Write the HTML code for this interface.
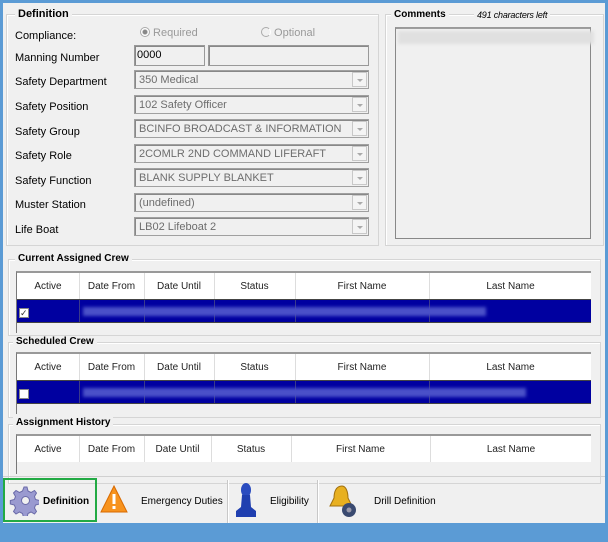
<!DOCTYPE html>
<html><head><meta charset="utf-8"><style>
*{margin:0;padding:0;box-sizing:border-box}
body{width:608px;height:526px;overflow:hidden;background:#5b9bd5;font-family:"Liberation Sans",sans-serif;font-size:11px;color:#000}
#win{position:absolute;left:3px;top:3px;width:602px;height:520px;background:#f0f0f0}
.a{position:absolute}
.gb{position:absolute;border:1px solid #d5d5d5;box-shadow:inset 1px 1px 0 #fff}
.lg{position:absolute;background:#f0f0f0;font-weight:bold;font-size:11px;padding:0 3px;white-space:nowrap}
.lbl{position:absolute;left:12px;font-size:11px}
.cb{position:absolute;left:131px;width:235px;height:19px;border:1px solid #a0a0a0;background:#f0f0f0;box-shadow:inset 1px 1px 0 #888;color:#6d6d6d;padding:3px 0 0 4px;font-size:11px}
.cb i{position:absolute;right:1px;top:1px;width:15px;height:15px;border:1px solid #c8c8c8;background:#f4f4f4}
.cb i:after{content:"";position:absolute;left:4px;top:6px;border:3px solid transparent;border-top:3px solid #aaa}
.grid{position:absolute;left:13px;width:575px;background:#f0f0f0;border-left:1px solid #777;border-top:2px solid #999}
.hdr{position:absolute;left:0;top:0;right:0;height:26px;background:#fff;font-size:10px;color:#222}
.hdr span{position:absolute;top:8px;text-align:center}
.hdr b{position:absolute;top:0;bottom:0;width:1px;background:#ddd}
.row{position:absolute;left:0;right:0;height:24px;background:#0000a0;border-top:1px solid #444;border-bottom:1px solid #444}
.row b{position:absolute;top:0;bottom:0;width:1px;background:#3a3a8a}
.blur{position:absolute;height:9px;background:#4a50c8;filter:blur(1.5px)}
.chk{position:absolute;left:2px;top:8px;width:10px;height:10px;background:#fff;border:1px solid #888}
.tb{position:absolute;height:46px;font-size:10px}
.sep{position:absolute;top:477px;width:2px;height:43px;border-left:1px solid #c8c8c8;border-right:1px solid #fff}
</style></head><body><div id="win">
<div class="gb" style="left:3px;top:11px;width:373px;height:232px"></div>
<div class="lg" style="left:12px;top:5px">Definition</div>
<div class="lbl" style="top:27px">Compliance:</div>
<div class="a" style="left:137px;top:23px;color:#999;font-size:11px"><span style="display:inline-block;width:10px;height:10px;border:1px solid #aaa;border-radius:50%;position:relative;top:1px;background:radial-gradient(#888 2px,#fff 3px)"></span> Required</div>
<div class="a" style="left:258px;top:23px;color:#999;font-size:11px"><span style="display:inline-block;width:10px;height:10px;border:1px solid #aaa;border-radius:50%;position:relative;top:1px;border-right-color:#fff"></span> Optional</div>
<div class="lbl" style="top:49px">Manning Number</div>
<div class="a" style="left:131px;top:42px;width:71px;height:21px;border:1px solid #999;box-shadow:inset 1px 1px 0 #888;padding:3px 0 0 2px">0000</div>
<div class="a" style="left:205px;top:42px;width:161px;height:21px;border:1px solid #999;box-shadow:inset 1px 1px 0 #888"></div>
<div class="lbl" style="top:73px">Safety Department</div><div class="cb" style="top:67px">350 Medical<i></i></div>
<div class="lbl" style="top:98px">Safety Position</div><div class="cb" style="top:92px">102 Safety Officer<i></i></div>
<div class="lbl" style="top:123px">Safety Group</div><div class="cb" style="top:116px">BCINFO BROADCAST &amp; INFORMATION<i></i></div>
<div class="lbl" style="top:147px">Safety Role</div><div class="cb" style="top:141px">2COMLR 2ND COMMAND LIFERAFT<i></i></div>
<div class="lbl" style="top:172px">Safety Function</div><div class="cb" style="top:165px">BLANK SUPPLY BLANKET<i></i></div>
<div class="lbl" style="top:196px">Muster Station</div><div class="cb" style="top:190px">(undefined)<i></i></div>
<div class="lbl" style="top:221px">Life Boat</div><div class="cb" style="top:214px">LB02 Lifeboat 2<i></i></div>
<div class="gb" style="left:382px;top:11px;width:219px;height:232px"></div>
<div class="lg" style="left:388px;top:6px;font-size:10px">Comments</div>
<div class="a" style="left:471px;top:7px;background:#f0f0f0;padding:0 3px;font-style:italic;font-size:9px;letter-spacing:-0.2px">491 characters left</div>
<div class="a" style="left:392px;top:24px;width:196px;height:212px;border:1px solid #888;border-top:2px solid #999;background:#f0f0f0"></div>
<div class="blur" style="left:395px;top:28px;width:196px;height:13px;background:#e0e0e0"></div>
<div class="gb" style="left:5px;top:256px;width:593px;height:77px"></div>
<div class="lg" style="left:12px;top:250px;font-size:10px">Current Assigned Crew</div>
<div class="grid" style="top:268px;height:62px">
<div class="hdr"><span style="left:0;width:62px">Active</span><b style="left:62px"></b><span style="left:62px;width:65px">Date From</span><b style="left:127px"></b><span style="left:127px;width:70px">Date Until</span><b style="left:197px"></b><span style="left:197px;width:81px">Status</span><b style="left:278px"></b><span style="left:278px;width:134px">First Name</span><b style="left:412px"></b><span style="left:412px;width:163px">Last Name</span></div>
<div class="row" style="top:26px"><b style="left:62px"></b><b style="left:127px"></b><b style="left:197px"></b><b style="left:278px"></b><b style="left:412px"></b><div class="chk" style="font-size:9px;line-height:8px;color:#333">✓</div><div class="blur" style="left:66px;top:7px;width:403px"></div></div>
</div>
<div class="gb" style="left:5px;top:339px;width:593px;height:76px"></div>
<div class="lg" style="left:10px;top:333px;font-size:10px">Scheduled Crew</div>
<div class="grid" style="top:349px;height:62px">
<div class="hdr"><span style="left:0;width:62px">Active</span><b style="left:62px"></b><span style="left:62px;width:65px">Date From</span><b style="left:127px"></b><span style="left:127px;width:70px">Date Until</span><b style="left:197px"></b><span style="left:197px;width:81px">Status</span><b style="left:278px"></b><span style="left:278px;width:134px">First Name</span><b style="left:412px"></b><span style="left:412px;width:163px">Last Name</span></div>
<div class="row" style="top:26px"><b style="left:62px"></b><b style="left:127px"></b><b style="left:197px"></b><b style="left:278px"></b><b style="left:412px"></b><div class="chk"></div><div class="blur" style="left:66px;top:7px;width:443px"></div></div>
</div>
<div class="gb" style="left:5px;top:421px;width:593px;height:60px"></div>
<div class="lg" style="left:10px;top:414px;font-size:10px">Assignment History</div>
<div class="grid" style="top:431px;height:40px">
<div class="hdr"><span style="left:0;width:62px">Active</span><b style="left:62px"></b><span style="left:62px;width:65px">Date From</span><b style="left:127px"></b><span style="left:127px;width:67px">Date Until</span><b style="left:194px"></b><span style="left:194px;width:80px">Status</span><b style="left:274px"></b><span style="left:274px;width:139px">First Name</span><b style="left:413px"></b><span style="left:413px;width:162px">Last Name</span></div>
</div>
<div class="a" style="left:0;top:473px;width:602px;height:1px;background:#d0d0d0"></div>
<div class="a" style="left:0;top:475px;width:94px;height:44px;border:2px solid #22aa44"></div>
<svg class="a" style="left:6px;top:481px" width="30" height="32" viewBox="0 0 30 32"><g fill="#9a9ad0" stroke="#6a6aa8" stroke-width="1"><path d="M15 3l3 0 1 4 3 1.5 3.5-2 2 2.5-2 3.5 1 3 4 1v3.5l-4 1-1 3 2 3.5-2 2.5-3.5-2-3 1.5-1 4h-3.5l-1-4-3-1.5-3.5 2-2.5-2.5 2-3.5-1.2-3-4-1v-3.5l4-1 1.2-3-2-3.5 2.5-2.5 3.5 2 3-1.5z"/></g><circle cx="16.5" cy="16.5" r="4" fill="#f0f0f0" stroke="#6a6aa8"/></svg>
<div class="tb" style="left:40px;top:493px;font-weight:bold">Definition</div>
<svg class="a" style="left:97px;top:481px" width="28" height="30" viewBox="0 0 28 30"><path d="M14 2L27 28H1Z" fill="#f7931e" stroke="#d86a00"/><rect x="12.5" y="10" width="3" height="10" fill="#fff"/><rect x="12.5" y="22" width="3" height="3" fill="#fff"/></svg>
<div class="tb" style="left:138px;top:493px">Emergency Duties</div>
<div class="sep" style="left:224px"></div>
<svg class="a" style="left:230px;top:478px" width="26" height="40" viewBox="0 0 26 40"><ellipse cx="13" cy="9" rx="5" ry="7" fill="#2a4cc0"/><path d="M9 14h8l1 12 5 4v6H3v-6l5-4z" fill="#1f3fb0"/></svg>
<div class="tb" style="left:267px;top:493px">Eligibility</div>
<div class="sep" style="left:314px"></div>
<svg class="a" style="left:324px;top:480px" width="32" height="36" viewBox="0 0 32 36"><path d="M15 3c-6 0-8 6-8 12l-4 8h22l-4-8c0-6-2-12-6-12z" fill="#e8b020" stroke="#a07010"/><circle cx="22" cy="27" r="7" fill="#3a4a70"/><circle cx="22" cy="27" r="2.5" fill="#99a"/></svg>
<div class="tb" style="left:371px;top:493px">Drill Definition</div>
</div></body></html>
